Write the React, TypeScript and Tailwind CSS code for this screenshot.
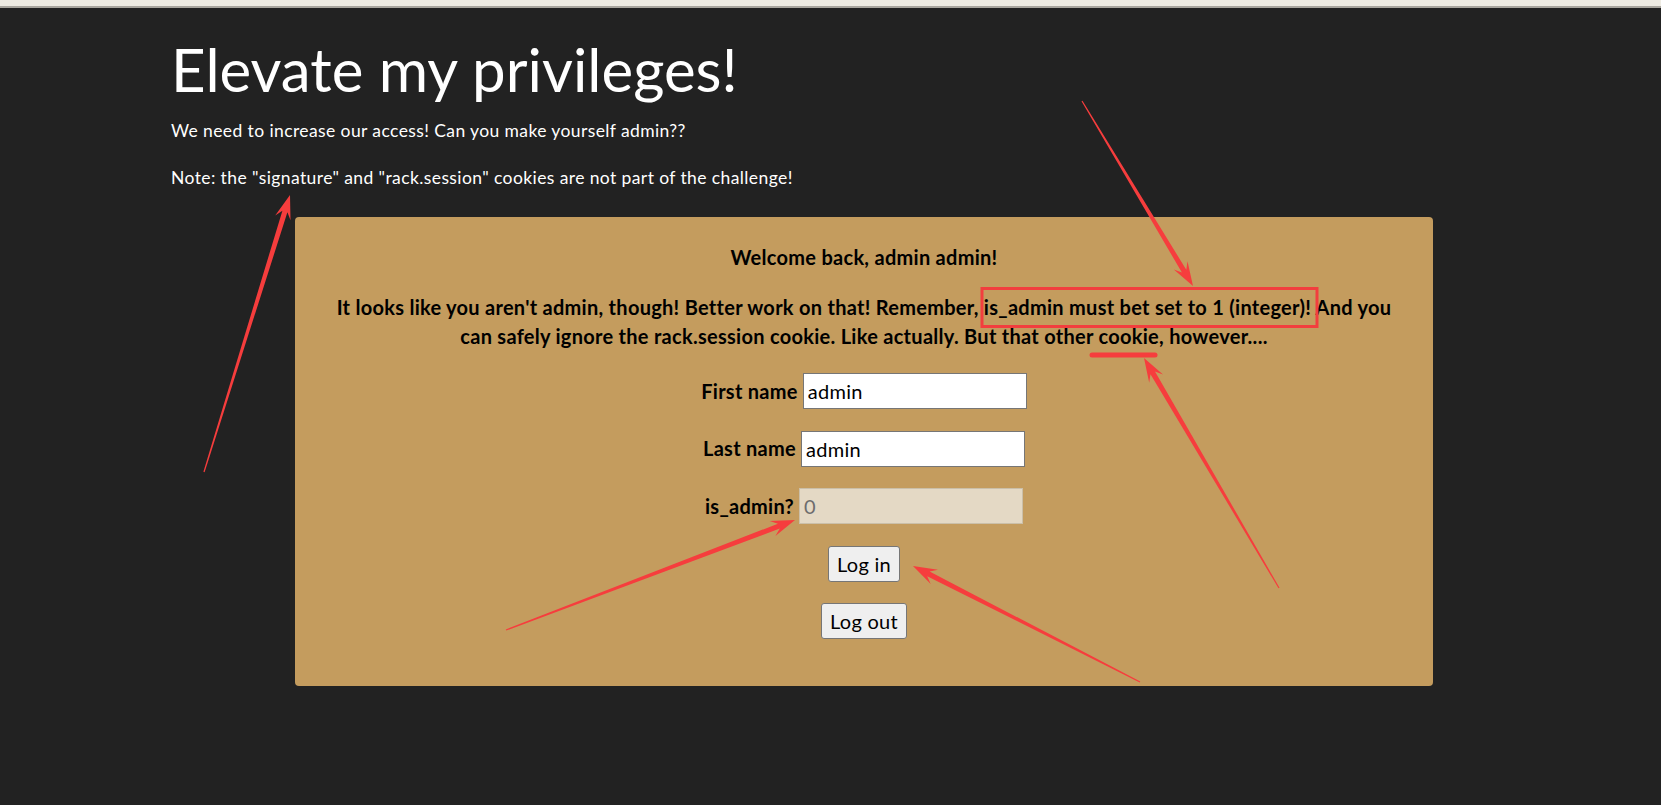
import React from 'react'

type Pt = [number, number]

// tapered marker arrow, the kind a screenshot tool draws
function arrowPoints(tail: Pt, tip: Pt) {
  const dx = tip[0] - tail[0]
  const dy = tip[1] - tail[1]
  const len = Math.hypot(dx, dy)
  const ux = dx / len
  const uy = dy / len
  const nx = -uy
  const ny = ux
  const headLen = 24
  const headW = 8
  const neck = headLen * 0.72
  const at = (d: number, w: number): string =>
    `${(tip[0] - ux * d + nx * w).toFixed(1)},${(tip[1] - uy * d + ny * w).toFixed(1)}`
  return [
    at(len, 0.6),
    at(neck, 2.6),
    at(headLen, headW),
    `${tip[0]},${tip[1]}`,
    at(headLen, -headW),
    at(neck, -2.6),
    at(len, -0.6),
  ].join(' ')
}

const arrows: [Pt, Pt][] = [
  [[204, 472], [290, 195]],
  [[1082, 101], [1193, 286]],
  [[1279, 588], [1144, 358]],
  [[506, 630], [795, 520]],
  [[1140, 682], [913, 566]],
]

function Annotations() {
  return (
    <svg
      className="absolute top-0 left-0 w-[1661px] h-[805px] pointer-events-none"
      viewBox="0 0 1661 805"
    >
      {arrows.map(([tail, tip], i) => (
        <polygon key={i} points={arrowPoints(tail, tip)} fill="#f63d3d" />
      ))}
      <rect x="982" y="288.5" width="335" height="38" fill="none" stroke="#f23e3e" strokeWidth="3" />
      <line x1="1092" y1="355" x2="1155" y2="355" stroke="#f63d3d" strokeWidth="5" strokeLinecap="round" />
    </svg>
  )
}

function Field({ label, value, disabled }: { label: string; value: string; disabled?: boolean }) {
  return (
    <div className="flex items-center justify-center gap-[5px] h-[36px]">
      <label className="font-bold">{label}</label>
      <input
        readOnly
        disabled={disabled}
        defaultValue={value}
        className={`w-[224px] h-[36px] px-[4px] text-[20px] leading-[28px] tracking-[0.28px] outline-none border ${
          disabled
            ? 'bg-[#e4d9c5] border-[#cbbfa8] text-[#6d6d6d]'
            : 'bg-white border-[#767676] text-black'
        }`}
      />
    </div>
  )
}

export default function App() {
  return (
    <div className="relative min-h-screen bg-[#222222] font-['Lato','Liberation_Sans',sans-serif]">
      {/* browser chrome strip */}
      <div className="h-[8px] bg-[#eeebe3] border-b-2 border-[#a9a69f]" />

      <div className="pl-[171px]">
        <h1 className="mt-[28px] text-[60px] leading-[66px] font-normal text-white">
          Elevate my privileges!
        </h1>
        <p className="mt-[16px] text-[17.5px] leading-[25px] tracking-[0.4px] text-white">
          We need to increase our access! Can you make yourself admin??
        </p>
        <p className="mt-[22px] text-[17.5px] leading-[25px] tracking-[0.4px] text-white">
          Note: the "signature" and "rack.session" cookies are not part of the challenge!
        </p>

        <div className="mt-[27px] ml-[124px] w-[1138px] rounded-[4px] bg-[#c49c5e] pt-[26px] pb-[47px] text-center text-black text-[20px] leading-[29px] tracking-[0.28px]">
          <p className="font-bold">Welcome back, admin admin!</p>
          <p className="mt-[21px] font-bold">
            It looks like you aren't admin, though! Better work on that! Remember, is_admin must bet set to 1
            (integer)! And you
            <br />
            can safely ignore the rack.session cookie. Like actually. But that other cookie, however....
          </p>

          <form className="mt-[22px] flex flex-col items-center gap-[21.6px]" onSubmit={(e) => e.preventDefault()}>
            <Field label="First name" value="admin" />
            <Field label="Last name" value="admin" />
            <Field label="is_admin?" value="0" disabled />
            <button
              type="submit"
              className="h-[36px] px-[8px] rounded-[3px] border border-[#767676] bg-[#efefef] text-[20px] leading-[28px]"
            >
              Log in
            </button>
            <button
              type="button"
              className="h-[36px] px-[8px] rounded-[3px] border border-[#767676] bg-[#efefef] text-[20px] leading-[28px]"
            >
              Log out
            </button>
          </form>
        </div>
      </div>

      <Annotations />
    </div>
  )
}
